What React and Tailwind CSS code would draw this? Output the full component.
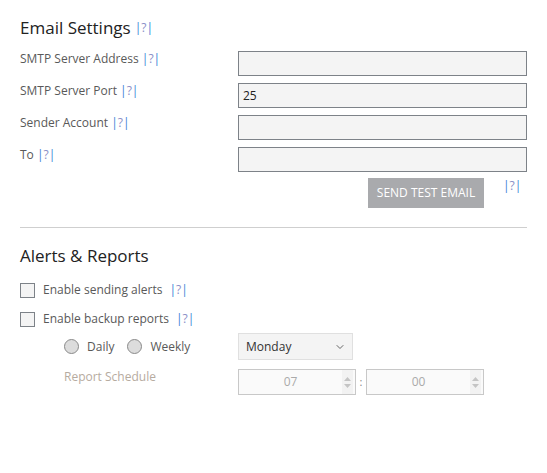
import { ChevronDown } from 'lucide-react';

const Help = ({ className = '' }) => (
  <span className={`text-[12px] ${className}`}>
    <span className="text-[#3b82d6]">|</span>
    <span className="text-[#8b8fc7]">?</span>
    <span className="text-[#3b82d6]">|</span>
  </span>
);

const fields = [
  { label: 'SMTP Server Address', value: '' },
  { label: 'SMTP Server Port', value: '25' },
  { label: 'Sender Account', value: '' },
  { label: 'To', value: '' },
];

function Spinner({ value }) {
  return (
    <div className="w-[118px] h-[26px] border border-[#c8c8c8] bg-[#fafafa] flex items-center">
      <span className="flex-1 text-center text-[12px] text-[#aaaaaa]">{value}</span>
      <div className="w-[11px] h-full flex flex-col items-center justify-center gap-[3px] mr-[2px] bg-[#f2f2f2]">
        <svg width="7" height="4" viewBox="0 0 7 4"><path d="M0 4 L3.5 0 L7 4Z" fill="#c4c4c4" /></svg>
        <svg width="7" height="4" viewBox="0 0 7 4"><path d="M0 0 L3.5 4 L7 0Z" fill="#c4c4c4" /></svg>
      </div>
    </div>
  );
}

export default function App() {
  return (
    <div className="w-[547px] h-[473px] bg-white px-5 pt-[17px] font-['Open_Sans',sans-serif] text-[#595959]">
      {/* Email settings */}
      <h2 className="text-[17px] text-[#222] leading-[22px] flex items-center">
        Email Settings <Help className="ml-[4px] text-[11px]" />
      </h2>
      <div className="mt-[12px] flex flex-col gap-[7px] w-[507px]">
        {fields.map((f) => (
          <div key={f.label} className="flex items-start">
            <div className="w-[218px] text-[12px] leading-[16px]">
              {f.label} <Help />
            </div>
            <div className="w-[289px] h-[25px] border border-[#7d8288] bg-[#f4f4f4] text-[12px] text-[#222] pl-[4px] flex items-center">
              {f.value}
            </div>
          </div>
        ))}
      </div>
      <div className="flex items-start w-[507px] mt-[6px]">
        <div className="ml-[348px] w-[116px] h-[30px] bg-[#a9aaad] text-white text-[12px] flex items-center justify-center">
          SEND TEST EMAIL
        </div>
        <Help className="ml-[19px] -mt-[1px]" />
      </div>

      <div className="mt-[19px] w-[507px] border-t border-[#cfcfcf]" />

      {/* Alerts & Reports */}
      <h2 className="mt-[17px] text-[17px] text-[#222] leading-[22px]">Alerts &amp; Reports</h2>
      <div className="mt-[14px] flex items-center">
        <div className="w-[15px] h-[15px] border border-[#7d8288] bg-[#f4f4f4]" />
        <span className="ml-[8px] text-[12px]">Enable sending alerts</span>
        <Help className="ml-[7px]" />
      </div>
      <div className="mt-[11px] flex items-center">
        <div className="w-[15px] h-[15px] border border-[#7d8288] bg-[#f4f4f4]" />
        <span className="ml-[8px] text-[12px]">Enable backup reports</span>
        <Help className="ml-[7px]" />
      </div>

      <div className="flex mt-[5px]">
        <div className="w-[218px] pl-[44px]">
          <div className="flex items-center h-[27px]">
            <div className="w-[15px] h-[15px] rounded-full border border-[#8a8a8a] bg-[#dcdcdc]" />
            <span className="ml-[8px] text-[12px]">Daily</span>
            <div className="ml-[13px] w-[15px] h-[15px] rounded-full border border-[#8a8a8a] bg-[#dcdcdc]" />
            <span className="ml-[8px] text-[12px]">Weekly</span>
          </div>
          <div className="mt-[8px] text-[12px] text-[#b6aba0]">Report Schedule</div>
        </div>
        <div>
          <div className="w-[115px] h-[27px] border border-[#e0e0e0] bg-[#f4f4f4] flex items-center justify-between pl-[7px] pr-[6px] text-[12px] text-[#333]">
            Monday
            <ChevronDown size={12} strokeWidth={2} className="text-[#666]" />
          </div>
          <div className="mt-[9px] flex items-center">
            <Spinner value="07" />
            <span className="w-[10px] text-center text-[11px] text-[#888]">:</span>
            <Spinner value="00" />
          </div>
        </div>
      </div>
    </div>
  );
}
